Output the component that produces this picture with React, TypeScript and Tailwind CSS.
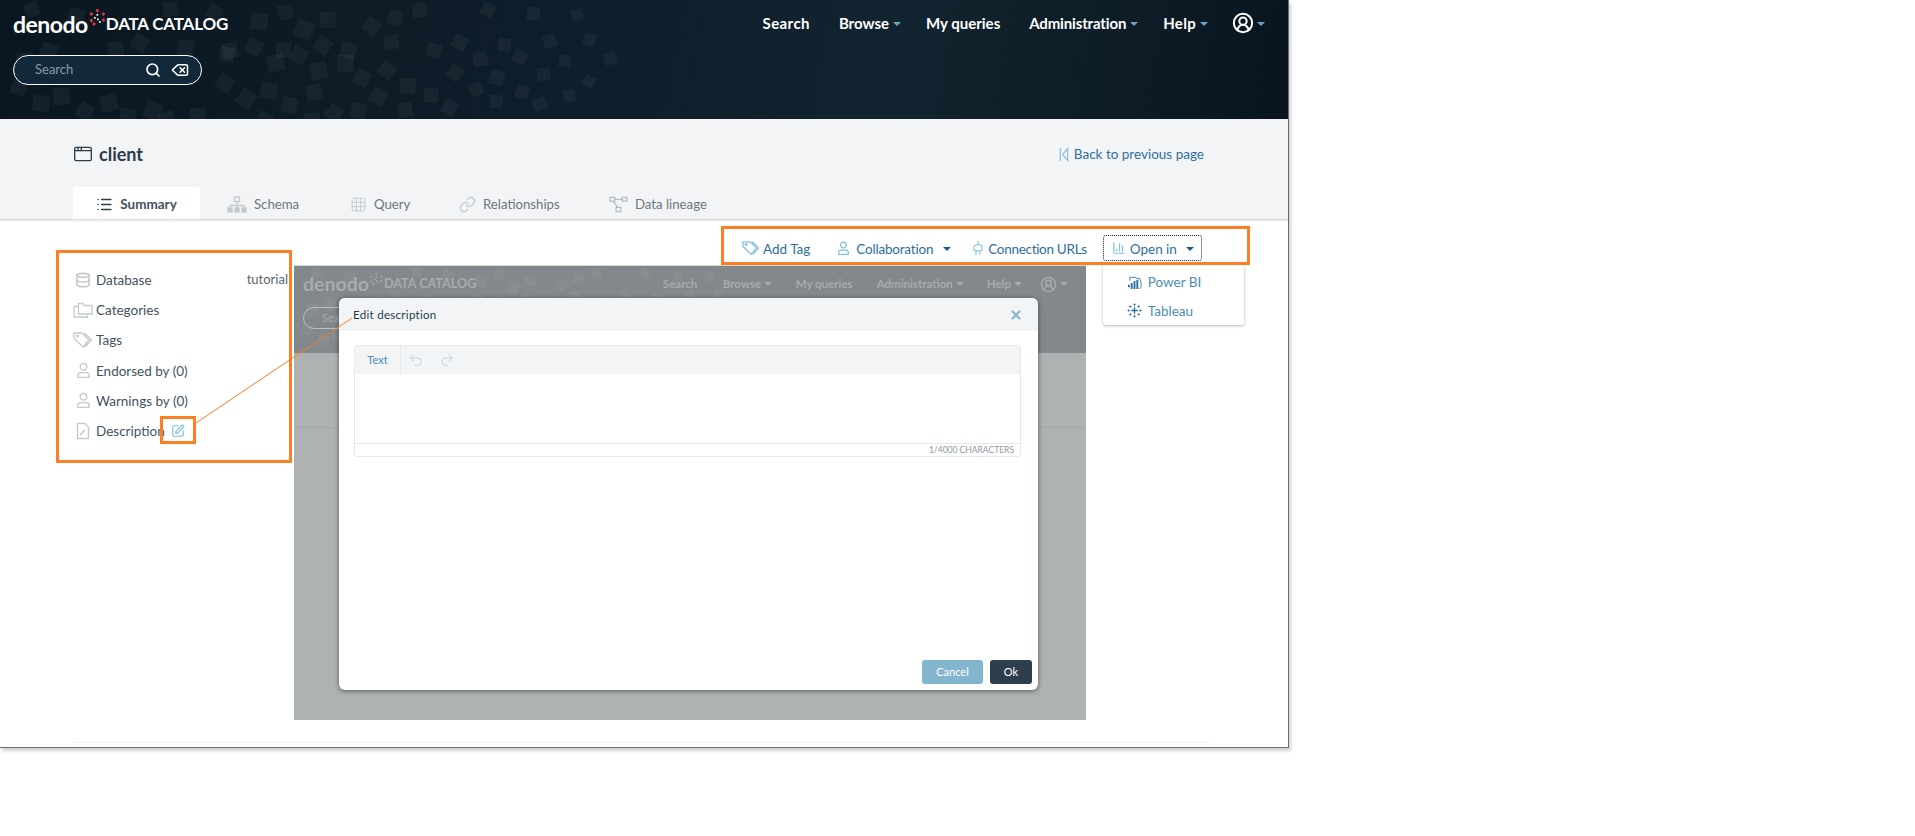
import React from 'react';
import {
  Database, Plug, ChartColumn, List, SquarePen, Grid3x3, Link,
  Undo2, Redo2, X, CircleUserRound, Search, Delete, AppWindow,
} from 'lucide-react';

const squares: number[][] = [
  [24,3,12],[69,8,13],[163,2,12],[208,5,12],[251,13,14],[278,5,12],[296,20,15],[320,12,13],[365,18,13],[388,10,12],[412,3,12],[482,3,11],[527,7,11],[571,10,10],
  [41,43,14],[108,42,13],[133,35,13],[178,40,13],[222,43,13],[247,39,13],[276,42,13],[316,37,13],[341,42,13],[384,35,12],[453,35,12],[498,38,11],[543,35,11],[584,33,10],
  [16,53,15],[86,58,13],[220,47,12],[267,55,14],[292,47,13],[337,55,14],[380,62,13],[427,43,12],[473,52,12],[514,50,11],[559,55,10],[604,53,10],
  [12,80,12],[53,88,14],[218,75,13],[261,82,14],[310,63,14],[355,70,13],[400,78,13],[449,65,12],[490,70,12],[537,68,11],[584,75,10],
  [33,95,14],[100,95,14],[145,102,14],[190,108,13],[239,90,14],[282,97,13],[306,85,13],[371,88,13],[424,88,12],[469,83,11],[516,85,11],[563,90,10],
  [78,103,13],[120,108,13],[159,112,13],[257,112,13],[304,113,13],[327,105,13],[351,103,13],[398,103,12],[443,100,12],[490,95,11],[533,98,11],
];

function Pattern({ scale, opacity }: { scale: number; opacity: number }) {
  return (
    <svg className="absolute inset-0 w-full h-full" aria-hidden="true">
      <g fill="#fff" fillOpacity={opacity} transform={`scale(${scale})`}>
        {squares.map(([x, y, s], i) => (
          <rect key={i} x={x} y={y} width={s * 1.2} height={s * 1.2} transform={`rotate(${(i * 37) % 60 - 20} ${x + s / 2} ${y + s / 2})`} />
        ))}
      </g>
    </svg>
  );
}

function LogoDots({ className, color, dot }: { className: string; color: string; dot: string }) {
  return (
    <svg viewBox="0 0 18 18" className={className} aria-hidden="true">
      {[[8,1],[2,4.5],[14,4.5],[2,11],[14,10.5],[4.5,14.5]].map(([x, y], i) => (
        <rect key={i} x={x} y={y} width={2.8} height={2.8} fill={color} transform={`rotate(45 ${x + 1.4} ${y + 1.4})`} />
      ))}
      {[[8.5,6],[6,9],[9,10.5],[11,13]].map(([x, y], i) => (
        <rect key={i} x={x} y={y} width={1.7} height={1.7} fill={dot} />
      ))}
    </svg>
  );
}

function Caret({ className }: { className: string }) {
  return <span className={`inline-block w-0 h-0 border-x-[4px] border-x-transparent border-t-[4px] ${className}`} />;
}

function FolderPair({ className }: { className: string }) {
  return (
    <svg viewBox="0 0 20 18" width="20" height="18" fill="none" stroke="currentColor" strokeWidth="1.3" className={className} aria-hidden="true">
      <path d="M5.5 13V2.5h4.5l1.5 2h7.5V13z" />
      <path d="M5.5 5.5H1V16h13.5v-3" />
    </svg>
  );
}

function TagPair({ className, size = 20 }: { className: string; size?: number }) {
  return (
    <svg viewBox="0 0 20 18" width={size} height={size * 0.9} fill="none" stroke="currentColor" strokeWidth="1.4" strokeLinejoin="round" className={className} aria-hidden="true">
      <path d="M1 2h8l7 7-6 7-9-9z" />
      <path d="M11.5 2l7 7-6.5 7" />
      <circle cx="4.5" cy="5" r="0.9" />
    </svg>
  );
}

function PersonIcon({ className, size = 16 }: { className: string; size?: number }) {
  return (
    <svg viewBox="0 0 16 18" width={size} height={size * 1.12} fill="none" stroke="currentColor" strokeWidth="1.4" className={className} aria-hidden="true">
      <circle cx="8" cy="5" r="3.6" />
      <path d="M2 16.5v-2.2c0-1.7 1.3-3 3-3h6c1.7 0 3 1.3 3 3v2.2z" />
    </svg>
  );
}

function DocPen({ className }: { className: string }) {
  return (
    <svg viewBox="0 0 14 18" width="14" height="18" fill="none" stroke="currentColor" strokeWidth="1.4" className={className} aria-hidden="true">
      <path d="M1.5 1.5h7.5l3.5 3.5v11.5h-11z" />
      <path d="M4 13l4.5-5" strokeWidth="1.8" />
    </svg>
  );
}

function SchemaTree({ className }: { className: string }) {
  return (
    <svg viewBox="0 0 20 18" width="20" height="18" fill="none" stroke="currentColor" strokeWidth="1.3" className={className} aria-hidden="true">
      <rect x="7.5" y="1" width="5" height="4.5" />
      <path d="M10 5.5v4M3 11.5V9.5h14v2M10 9.5v2" />
      <rect x="1" y="12" width="4" height="4" fill="currentColor" />
      <rect x="8" y="12" width="4" height="4" fill="currentColor" />
      <rect x="15" y="12" width="4" height="4" fill="currentColor" />
    </svg>
  );
}

function LineageIcon({ className }: { className: string }) {
  return (
    <svg viewBox="0 0 20 18" width="19" height="17" fill="none" stroke="currentColor" strokeWidth="1.3" className={className} aria-hidden="true">
      <rect x="1" y="1.5" width="5" height="4" />
      <rect x="14" y="1.5" width="5" height="4" />
      <rect x="7.5" y="12" width="5" height="4.5" />
      <path d="M6 3.5h8M4.5 5.5l4.5 6.5" />
    </svg>
  );
}

function BackIcon() {
  return (
    <svg viewBox="0 0 11 16" width="10" height="15" fill="none" stroke="#8fc0dc" strokeWidth="1.4" aria-hidden="true">
      <path d="M1.5 1v14" />
      <path d="M9.5 1.5L4 8l5.5 6.5z" />
    </svg>
  );
}

function PowerBiIcon() {
  return (
    <svg viewBox="0 0 16 16" width="15" height="15" fill="none" stroke="#2f6f9c" aria-hidden="true">
      <path d="M3 6V2.5h6l1 1h3.5L15 8v5l-1.5 2" strokeWidth="0.9" />
      <path d="M2 10.5V13M5 8.5V15M8 6.5V15M11 5v10" strokeWidth="2" />
    </svg>
  );
}

function TableauIcon() {
  return (
    <svg viewBox="0 0 16 16" width="15" height="15" fill="none" stroke="#2f6f9c" strokeWidth="1" aria-hidden="true">
      <path d="M8 4.5v7M4.5 8h7" strokeWidth="1.4" />
      <path d="M8 .5v2.5M6.8 1.7h2.4M8 13v2.5M6.8 14.3h2.4M.5 8H3M1.7 6.8v2.4M13 8h2.5M14.3 6.8v2.4" />
      <path d="M3.5 2.5v2.4M2.3 3.7h2.4M12.5 2.5v2.4M11.3 3.7h2.4M3.5 11.1v2.4M2.3 12.3h2.4M12.5 11.1v2.4M11.3 12.3h2.4" />
    </svg>
  );
}

function NavItem({ label, caret, left }: { label: string; caret?: boolean; left: string }) {
  return (
    <span className={`flex items-center gap-[4px] ${left}`}>
      {label}
      {caret && <Caret className="border-t-[#6fa3c4] mt-[2px]" />}
    </span>
  );
}

function Tab({ icon, label, width }: { icon: React.ReactNode; label: string; width: string }) {
  return (
    <div className={`flex items-center gap-[7px] h-8 pt-[3px] text-[13.2px] text-[#6b7780] ${width}`}>
      {icon}
      <span>{label}</span>
    </div>
  );
}

function InfoRow({ icon, label, value, extra }: { icon: React.ReactNode; label: string; value?: string; extra?: React.ReactNode }) {
  return (
    <div className="flex items-center h-[30.2px] text-[13.5px] text-[#44525e]">
      <span className="w-[20px] mr-[3px] flex justify-center">{icon}</span>
      <span>{label}</span>
      {extra}
      {value && <span className="ml-auto text-[13px] text-[#59666f]">{value}</span>}
    </div>
  );
}

function EditDialog() {
  return (
    <div className="absolute left-[45px] top-[32px] w-[699px] h-[392px] bg-white rounded-md shadow-[0_1px_5px_rgba(0,0,0,0.5)] flex flex-col overflow-hidden">
      <div className="h-[33px] bg-[#f2f4f6] flex items-center justify-between pl-[14px] pr-[15px] text-[11.5px] tracking-[0.3px] text-[#243a49]">
        <span>Edit description</span>
        <X size={14} strokeWidth={4} className="text-[#8fb8d2]" />
      </div>
      <div className="mx-[15px] mt-[14px] mr-[17px] h-[112px] border border-[#e6e8ea] rounded-[3px] flex flex-col">
        <div className="h-[28px] bg-[#f2f4f6] flex items-center text-[11px] text-[#4b8db5]">
          <span className="w-[46px] h-full flex items-center justify-center border-r border-[#e6e8ea]">Text</span>
          <Undo2 size={16} strokeWidth={1.5} className="ml-[7px] text-[#bcd5e4]" />
          <Redo2 size={16} strokeWidth={1.5} className="ml-[15px] text-[#bcd5e4]" />
        </div>
        <div className="flex-1 border-b border-[#e6e8ea]" />
        <div className="h-3 flex items-center justify-end pr-[6px] text-[8.5px] text-[#8d979e]">1/4000 CHARACTERS</div>
      </div>
      <div className="mt-auto mb-[6px] pr-[6px] flex justify-end gap-[7px] text-[11px] text-white">
        <span className="w-[61px] h-6 rounded-[3px] bg-[#84b5cf] flex items-center justify-center">Cancel</span>
        <span className="w-[42px] h-6 rounded-[3px] bg-[#2d3f4c] flex items-center justify-center">Ok</span>
      </div>
    </div>
  );
}

function PastedScreenshot() {
  return (
    <div className="relative w-[792px] h-[455px] bg-[#aeb2b2] overflow-hidden border-t border-[#d4d6d7]">
      <div className="relative h-[87px] bg-[#82888b] overflow-hidden">
        <Pattern scale={0.72} opacity={0.05} />
        <div className="relative flex items-center h-[36px] pl-[9px] text-[#a7acae] font-bold">
          <span className="text-[19.5px] leading-none">denodo</span>
          <LogoDots className="w-[14px] h-[14px] -mt-[10px]" color="#a39a98" dot="#b5b9ba" />
          <span className="text-[12.6px] ml-px">DATA CATALOG</span>
          <div className="absolute right-[18px] top-0 h-full flex items-center text-[11.5px]">
            <span>Search</span>
            <span className="ml-[25.5px] flex items-center gap-[3px]">Browse<Caret className="border-t-[#a7acae]" /></span>
            <span className="ml-[23.5px]">My queries</span>
            <span className="ml-[24px] flex items-center gap-[3px]">Administration<Caret className="border-t-[#a7acae]" /></span>
            <span className="ml-[23px] flex items-center gap-[3px]">Help<Caret className="border-t-[#a7acae]" /></span>
            <CircleUserRound size={17} className="ml-[18px]" />
            <Caret className="ml-[3px] border-t-[#a7acae]" />
          </div>
        </div>
        <div className="relative ml-[9px] mt-[5px] w-[160px] h-[22px] rounded-full border border-[#b9bebf] pl-[18px] flex items-center text-[11px] text-[#a7acae]">Search</div>
      </div>
      <div className="h-[75px] border-b border-[#a3a8a8]" />
      <EditDialog />
    </div>
  );
}

export default function App() {
  return (
    <div className="relative w-[1915px] h-[836px] bg-white overflow-hidden font-['Lato',sans-serif]">
      <div className="w-[1289px] h-[748px] bg-white border-r border-b border-[#6e6e6e] shadow-[2px_3px_3px_rgba(0,0,0,0.18)] flex flex-col">

        {/* top bar */}
        <header className="relative h-[119px] shrink-0 bg-[linear-gradient(100deg,#0a1721_0%,#0e1e2a_45%,#12242f_70%,#081520_100%)] overflow-hidden">
          <Pattern scale={1} opacity={0.045} />
          <div className="relative flex items-start justify-between h-[46px] text-white">
            <div className="flex items-center h-[48px] pl-[13px] font-bold">
              <span className="text-[23px] leading-none tracking-[-0.5px]">denodo</span>
              <LogoDots className="w-[18px] h-[18px] -mt-[14px]" color="#e2333d" dot="#ffffff" />
              <span className="text-[17px] tracking-[-0.2px]">DATA CATALOG</span>
            </div>
            <nav className="flex items-center h-[46px] text-[15px] font-bold pr-[23px]">
              <span className="tracking-[0.4px]">Search</span>
              <NavItem label="Browse" caret left="ml-[29px]" />
              <NavItem label="My queries" left="ml-[25px]" />
              <NavItem label="Administration" caret left="ml-[29px] tracking-[-0.15px]" />
              <NavItem label="Help" caret left="ml-[25px] tracking-[0.3px]" />
              <CircleUserRound size={22} strokeWidth={2.2} className="ml-[24px]" />
              <Caret className="ml-[3px] border-t-[#6fa3c4] mt-[2px]" />
            </nav>
          </div>
          <div className="relative ml-[13px] mt-[9px] w-[189px] h-[30px] rounded-full border border-white bg-[#11293a] flex items-center pl-[21px] pr-[12px] text-[13px] text-[#8c9aa4]">
            <span>Search</span>
            <Search size={16} strokeWidth={2.5} className="ml-auto text-white" />
            <Delete size={18} className="ml-[10px] text-white" />
          </div>
        </header>

        {/* title + tabs */}
        <section className="h-[101px] shrink-0 bg-[#f2f4f6] border-b border-[#d9dcdf] shadow-[0_1px_2px_rgba(0,0,0,0.1)] flex flex-col pl-[73px]">
          <div className="flex items-center justify-between h-[70px] pr-[84px]">
            <div className="flex items-center gap-[6px] text-[18px] font-bold text-[#2c3c48]">
              <AppWindow size={20} strokeWidth={1.6} />
              client
            </div>
            <div className="flex items-center gap-[5px] text-[13.5px] text-[#2f6f9c]">
              <BackIcon />
              Back to previous page
            </div>
          </div>
          <div className="flex items-end h-[30px]">
            <div className="w-[127px] h-[32px] rounded-t-[4px] bg-white flex items-center justify-center gap-[7px] pt-[3px] text-[13.5px] font-bold text-[#44525e]">
              <List size={17} strokeWidth={2.2} className="text-[#2c3c48]" />
              Summary
            </div>
            <Tab icon={<SchemaTree className="text-[#c4cacf]" />} label="Schema" width="ml-[27px] w-[123px]" />
            <Tab icon={<Grid3x3 size={17} strokeWidth={1.3} className="text-[#c4cacf]" />} label="Query" width="w-[109px]" />
            <Tab icon={<Link size={17} strokeWidth={1.8} className="text-[#c4cacf]" />} label="Relationships" width="w-[150px]" />
            <Tab icon={<LineageIcon className="text-[#b4bbc1]" />} label="Data lineage" width="" />
          </div>
        </section>

        {/* body */}
        <main className="relative flex-1 flex">
          <div className="w-[294px] shrink-0 pl-[73px] pr-[6px] pt-[45px]">
            <InfoRow icon={<Database size={16} strokeWidth={2.4} className="text-[#c4cacf]" />} label="Database" value="tutorial" />
            <InfoRow icon={<FolderPair className="text-[#c4cacf]" />} label="Categories" />
            <InfoRow icon={<TagPair className="text-[#c4cacf]" />} label="Tags" />
            <InfoRow icon={<PersonIcon size={15} className="text-[#c4cacf]" />} label="Endorsed by (0)" />
            <InfoRow icon={<PersonIcon size={15} className="text-[#c4cacf]" />} label="Warnings by (0)" />
            <InfoRow
              icon={<DocPen className="text-[#c4cacf]" />}
              label="Description"
              extra={<SquarePen size={14} className="ml-[6px] text-[#7fbfe0]" />}
            />
          </div>
          <div className="flex-1 flex flex-col">
            <div className="flex items-center h-[26px] mt-[15px] pl-[448px] text-[13.5px] text-[#2f6f9c]">
              <TagPair size={18} className="text-[#7fbfe0]" />
              <span className="ml-[3px] pt-[2px]">Add Tag</span>
              <PersonIcon size={13} className="ml-[27px] text-[#7fbfe0]" />
              <span className="ml-[6px] pt-[2px] tracking-[-0.2px]">Collaboration</span>
              <Caret className="ml-[10px] mt-[2px] border-t-[#1c5a85]" />
              <Plug size={16} strokeWidth={1.6} className="ml-[19px] text-[#7fbfe0] rotate-180" />
              <span className="ml-[2px] pt-[2px] tracking-[-0.3px]">Connection URLs</span>
              <div className="relative ml-[16px] w-[99px] h-[26px] rounded-[3px] border border-dotted border-[#222] flex items-center pl-[8px]">
                <ChartColumn size={14} className="text-[#7fbfe0]" />
                <span className="ml-[4px] pt-[2px]">Open in</span>
                <Caret className="ml-[9px] mt-[2px] border-t-[#1c5a85]" />
                <div className="absolute -left-px top-[28px] w-[141px] h-[61px] bg-white rounded-[3px] shadow-[0_1px_3px_rgba(0,0,0,0.3)] flex flex-col justify-center pt-[4px] pl-[24px] text-[#4b8db5]">
                  <div className="flex items-center h-[30px] gap-[6px]"><PowerBiIcon />Power BI</div>
                  <div className="flex items-center h-[30px] gap-[6px]"><TableauIcon />Tableau</div>
                </div>
              </div>
            </div>
            <div className="mt-[4px]">
              <PastedScreenshot />
            </div>
          </div>
          <div className="absolute left-[73px] right-[78px] bottom-[4px] border-t border-[#eeeff0]" />
        </main>
      </div>

      {/* orange callouts drawn over the page */}
      <div className="absolute left-[56px] top-[250px] w-[236px] h-[213px] border-[3px] border-[#fd7e23]" />
      <div className="absolute left-[160px] top-[416px] w-[36px] h-[28px] border-[3px] border-[#fd7e23]" />
      <div className="absolute left-[721px] top-[226px] w-[529px] h-[39px] border-[3px] border-[#fd7e23]" />
      <svg className="absolute inset-0 w-full h-full pointer-events-none" aria-hidden="true">
        <line x1="196" y1="423" x2="352" y2="318" stroke="#fd7e23" strokeWidth="1" />
      </svg>
    </div>
  );
}
